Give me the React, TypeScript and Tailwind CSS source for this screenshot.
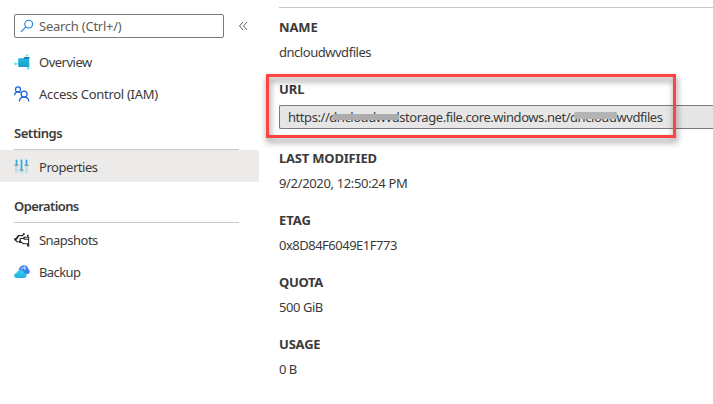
import type { ReactNode } from 'react';

function SearchIcon() {
  return (
    <svg className="h-[14px] w-[14px] shrink-0" viewBox="0 0 14 14" fill="none" stroke="#1a80d9" strokeWidth="1.1">
      <circle cx="8.7" cy="5.1" r="3.9" />
      <path d="M5.9 7.9 1 12.8" />
    </svg>
  );
}

function OverviewIcon() {
  return (
    <svg className="h-4 w-4 shrink-0" viewBox="0 0 16 16">
      <defs>
        <linearGradient id="folder" x1="0" y1="0" x2="0" y2="1">
          <stop offset="0" stopColor="#25bce0" />
          <stop offset="1" stopColor="#1b9fc9" />
        </linearGradient>
      </defs>
      <path d="M1.5 9.8H5M12 3l1-2M14 12v2.5" stroke="#9be9f7" strokeWidth="1" />
      <circle cx="1.5" cy="9.8" r="1.4" fill="#50e6ff" />
      <circle cx="13.2" cy="1.3" r="1" fill="#50e6ff" />
      <circle cx="14.1" cy="14.2" r="1.2" fill="#50e6ff" />
      <path d="M4.2 4.2h5.3l1-1h4.8v9q0 .8-.8.8H5q-.8 0-.8-.8z" fill="url(#folder)" />
      <path d="M9.5 4.2l1-1h4.8v1.2H9.8z" fill="#0b5794" />
    </svg>
  );
}

function PeopleIcon() {
  return (
    <svg className="h-4 w-4 shrink-0" viewBox="0 0 16 16" fill="none" stroke="#1b63dc" strokeWidth="1.25">
      <circle cx="4" cy="3.4" r="2.5" />
      <path d="M.6 9.2C.8 7.2 2 5.9 4 5.9c1 0 1.8.3 2.4.9" />
      <circle cx="10.1" cy="8" r="3" />
      <path d="M5.3 15.5c.2-2.7 2-4.5 4.8-4.5s4.6 1.8 4.8 4.500" />
    </svg>
  );
}

function SlidersIcon() {
  return (
    <svg className="h-4 w-4 shrink-0" viewBox="0 0 16 16">
      <path d="M1 1h3v14H1zM6 1h3v14H6zM11 1h3v14h-3z" fill="#b9e2f0" />
      <path d="M1.800 2h1.400v5H1.800zM6.800 2h1.400v10H6.800zM11.800 2h1.400v5h-1.400z" fill="#35a5d5" />
      <path d="M.5 6.500h4v1.500h-4zM5.500 11.500h4V13h-4zM10.500 6.500h4v1.500h-4z" fill="#929da0" />
    </svg>
  );
}

function SnapshotsIcon() {
  return (
    <svg className="h-4 w-4 shrink-0" viewBox="0 0 16 16" fill="none" stroke="#24292b" strokeWidth="1.1">
      <path d="M1.500 7.300 4.200 3.600h4.500l1-1.600M4.500 4l-1.700 3M4.500 9.800H2.800L1.200 7.300" />
      <path d="M6.200 10.300V6.500h3l1-1.300h4.400v6.600H9.400L6.300 9.500M10.200 5.200v2h4.200M13.200 11.800l1 2" />
      <g fill="#24292b" stroke="none">
        <circle cx="1.4" cy="7.4" r="1.3" />
        <circle cx="9.8" cy="2" r="1" />
        <circle cx="5.9" cy="9.7" r="1.3" />
        <circle cx="13.8" cy="3.8" r="1" />
        <circle cx="14.2" cy="13.4" r="1.2" />
      </g>
    </svg>
  );
}

function BackupIcon() {
  return (
    <svg className="h-4 w-4 shrink-0" viewBox="0 0 16 16">
      <defs>
        <linearGradient id="cloud" x1="0" y1="0" x2="0" y2="1">
          <stop offset="0" stopColor="#35d6ef" />
          <stop offset="1" stopColor="#22b0dc" />
        </linearGradient>
      </defs>
      <path d="M4.800 5.800C5.300 2.800 7.400 1.200 9.900 1.200c2.700 0 4.400 1.700 4.600 4 .8.500 1.300 1.200 1.300 2.200 0 1.600-1.200 2.600-2.800 2.600H7z" fill="#3b82ee" />
      <path d="M7.200 5.200c.5-1.300 1.800-1.700 3.800-1.300M9.900 2.300l1.800 1.700L10 5.600" fill="none" stroke="#e5f3ff" strokeWidth="1" />
      <path d="M3 14Q.1 13.900.1 11.500.1 9.300 2.400 8.900C3 7 4.400 5.900 6.200 5.900c2.200 0 3.600 1.300 4 3.200 1.500.2 2.400 1.100 2.400 2.400 0 1.500-1.200 2.500-2.800 2.500z" fill="url(#cloud)" />
    </svg>
  );
}

interface NavItemProps {
  icon: ReactNode;
  label: string;
  className: string;
}

function NavItem({ icon, label, className }: NavItemProps) {
  return (
    <div className={`flex h-8 items-center gap-[9px] whitespace-nowrap pl-[14px] ${className}`}>
      {icon}
      <span className="pt-px">{label}</span>
    </div>
  );
}

function Section({ label, tracking }: { label: string; tracking: string }) {
  return (
    <div className="mr-5 ml-[14px] h-10 border-b border-[#c8c8c8] pt-[13px] font-semibold leading-5">
      <span className={tracking}>{label}</span>
    </div>
  );
}

interface PropertyProps {
  label: string;
  value: string;
  labelTracking: string;
  valueTracking: string;
}

function Property({ label, value, labelTracking, valueTracking }: PropertyProps) {
  return (
    <div className="h-[62px] whitespace-nowrap leading-5">
      <div className={`font-bold ${labelTracking}`}>{label}</div>
      <div className={`mt-[5px] ${valueTracking}`}>{value}</div>
    </div>
  );
}

export default function App() {
  return (
    <div className="relative flex h-[404px] w-[713px] overflow-hidden bg-white font-['Noto_Sans','Open_Sans',sans-serif] text-[13px] text-[#3b3a39]">
      <aside className="w-[259px] shrink-0">
        <div className="flex items-center pt-[14px] pb-2">
          <div className="ml-[14px] flex h-6 w-[210px] items-center gap-[5px] rounded-[2px] border border-[#7b7a79] pl-[5px] text-[#605e5c]">
            <SearchIcon />
            <span className="pt-px tracking-[-0.25px]">Search (Ctrl+/)</span>
          </div>
          <svg className="ml-[14px] h-[10px] w-[10px]" viewBox="0 0 10 10" fill="none" stroke="#605e5c" strokeWidth="1">
            <path d="M5 1 1.500 5 5 9M9 1 5.500 5 9 9" />
          </svg>
        </div>
        <NavItem icon={<OverviewIcon />} label="Overview" className="tracking-[-0.5px]" />
        <NavItem icon={<PeopleIcon />} label="Access Control (IAM)" className="tracking-[-0.3px]" />
        <Section label="Settings" tracking="tracking-[-0.45px]" />
        <div className="bg-[#edebe9]">
          <NavItem icon={<SlidersIcon />} label="Properties" className="tracking-[-0.45px] [&>span]:pt-[3px]" />
        </div>
        <div className="h-px" />
        <Section label="Operations" tracking="tracking-[-0.6px]" />
        <div className="h-px" />
        <NavItem icon={<SnapshotsIcon />} label="Snapshots" className="tracking-[-0.53px]" />
        <NavItem icon={<BackupIcon />} label="Backup" className="tracking-[-0.6px]" />
      </aside>
      <main className="ml-5 flex-1 pt-[7px]">
        <div className="h-[10px] border-t border-[#c8c8c8]" />
        <Property label="NAME" value="dncloudwvdfiles" labelTracking="tracking-[-0.1px]" valueTracking="tracking-[-0.47px]" />
        <div className="h-[69px]">
          <div className="font-bold leading-5 tracking-[-0.1px]">URL</div>
          <div className="mt-[6px] flex h-6 items-center rounded-l-[2px] border border-r-0 border-[#7b7a79] bg-[#e6e6e6] pl-2">
            <span className="relative whitespace-nowrap pt-px tracking-[-0.44px]">
              https://dncloudwvdstorage.file.core.windows.net/dncloudwvdfiles
              <span className="absolute top-[7px] left-[44px] h-[6px] w-[67px] rounded-[2px] bg-[#acacac]" />
              <span className="absolute top-[5px] left-[286px] h-[7px] w-[43px] rounded-[2px] bg-[#b4b4b4]" />
            </span>
          </div>
        </div>
        <Property label="LAST MODIFIED" value="9/2/2020, 12:50:24 PM" labelTracking="tracking-[-0.2px]" valueTracking="tracking-[-0.35px]" />
        <Property label="ETAG" value="0x8D84F6049E1F773" labelTracking="tracking-[0px]" valueTracking="tracking-[-0.5px]" />
        <Property label="QUOTA" value="500 GiB" labelTracking="tracking-[-0.35px]" valueTracking="tracking-[-0.45px]" />
        <Property label="USAGE" value="0 B" labelTracking="tracking-[-0.2px]" valueTracking="tracking-[-0.5px]" />
      </main>
      <div className="absolute top-[74px] left-[266px] h-[64px] w-[410px] border-3 border-[#ff4343] drop-shadow-[1px_4px_3px_rgba(0,0,0,0.5)]" />
    </div>
  );
}
